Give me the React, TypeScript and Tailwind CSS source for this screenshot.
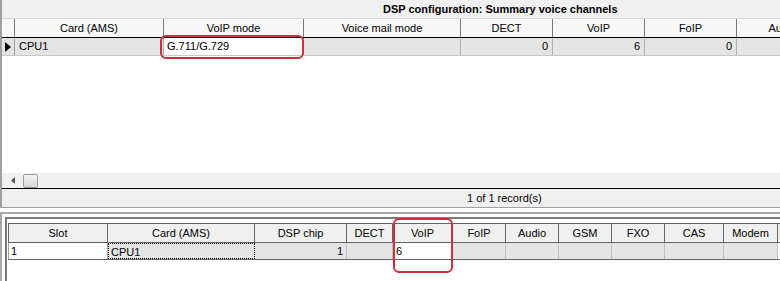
const font = { fontFamily: '"Liberation Sans", Arial, sans-serif' };

type Col = { label: string; w: string };

const topCols: Col[] = [
	{ label: '', w: 'w-[13px]' },
	{ label: 'Card (AMS)', w: 'w-[149px]' },
	{ label: 'VoIP mode', w: 'w-[140px]' },
	{ label: 'Voice mail mode', w: 'w-[157px]' },
	{ label: 'DECT', w: 'w-[92px]' },
	{ label: 'VoIP', w: 'w-[92px]' },
	{ label: 'FoIP', w: 'w-[92px]' },
	{ label: 'Audio', w: 'w-[92px]' },
];

const bottomCols: Col[] = [
	{ label: 'Slot', w: 'w-[100px]' },
	{ label: 'Card (AMS)', w: 'w-[147px]' },
	{ label: 'DSP chip', w: 'w-[92px]' },
	{ label: 'DECT', w: 'w-[46px]' },
	{ label: 'VoIP', w: 'w-[60px]' },
	{ label: 'FoIP', w: 'w-[53px]' },
	{ label: 'Audio', w: 'w-[53px]' },
	{ label: 'GSM', w: 'w-[53px]' },
	{ label: 'FXO', w: 'w-[53px]' },
	{ label: 'CAS', w: 'w-[59px]' },
	{ label: 'Modem', w: 'w-[54px]' },
];

function TopGrid() {
	return (
		<div className="flex flex-col h-[208px] border-l-2 border-b border-[#a0a0a0] bg-white">
			<div className="h-[19px] shrink-0 bg-[#f0f0f0] border-b border-[#d8d8d8] pl-[381px] text-[11px] font-bold leading-[19px] text-black whitespace-nowrap">
				DSP configuration: Summary voice channels
			</div>
			<div className="flex h-[19px] shrink-0 bg-[#f7f7f7] border-b border-black">
				{topCols.map((c, i) => (
					<div
						key={i}
						className={`${c.w} shrink-0 border-r border-[#7a7a7a] text-center text-[11px] leading-[18px] whitespace-nowrap overflow-hidden`}
					>
						{c.label}
					</div>
				))}
			</div>
			<div className="flex h-[18px] shrink-0 bg-[#e4e4e4] border-b border-[#c8c8c8] text-[11px] leading-[17px]">
				<div className="w-[13px] shrink-0 border-r border-[#a0a0a0] flex items-center pl-[3px]">
					<svg width="6" height="10" viewBox="0 0 6 10">
						<path d="M0 0 L6 5 L0 10 Z" fill="#000" />
					</svg>
				</div>
				<div className="w-[149px] shrink-0 border-r border-[#b0b0b0] pl-[4px]">CPU1</div>
				<div className="w-[140px] shrink-0 border-r border-[#b0b0b0] bg-white pl-[3px]">G.711/G.729</div>
				<div className="w-[157px] shrink-0 border-r border-[#b0b0b0]" />
				<div className="w-[92px] shrink-0 border-r border-[#b0b0b0] text-right pr-[4px]">0</div>
				<div className="w-[92px] shrink-0 border-r border-[#b0b0b0] text-right pr-[4px]">6</div>
				<div className="w-[92px] shrink-0 border-r border-[#b0b0b0] text-right pr-[4px]">0</div>
				<div className="w-[92px] shrink-0" />
			</div>
			<div className="flex-1" />
			<div className="h-[16px] shrink-0 bg-[#f0f0f0] border-b border-black flex items-center">
				<svg width="4" height="7" viewBox="0 0 4 7" className="ml-[9px]">
					<path d="M4 0 L0 3.5 L4 7 Z" fill="#555" />
				</svg>
				<div className="ml-[8px] w-[15px] h-[14px] rounded-[2px] border border-[#9a9a9a] bg-gradient-to-b from-[#f4f4f4] to-[#d6d6d6]" />
			</div>
			<div className="h-[18px] shrink-0 bg-[#f0f0f0] pl-[465px] text-[11px] leading-[18px] whitespace-nowrap">
				1 of 1 record(s)
			</div>
		</div>
	);
}

function BottomGrid() {
	return (
		<div className="mt-[4px] border-l-2 border-t-2 border-[#a8a8a8] pl-[3px] pt-[3px] h-[69px]">
			<div className="border-l-2 border-t-2 border-[#7a7a7a] pl-[1px] pt-[4px] h-full">
				<div className="flex h-[20px] bg-[#f0f0f0] border-t border-b border-[#646464]">
					{bottomCols.map((c, i) => (
						<div
							key={i}
							className={`${c.w} shrink-0 border-r border-[#646464] text-center text-[11px] leading-[18px] whitespace-nowrap ${i === 0 ? 'border-l' : ''}`}
						>
							{c.label}
						</div>
					))}
				</div>
				<div className="flex h-[17px] text-[11px] leading-[16px] border-b border-[#646464]">
					<div className="w-[100px] shrink-0 bg-white border-l border-r border-[#a0a0a0] pl-[2px]">1</div>
					<div className="w-[147px] shrink-0 bg-[#e4e4e4] border border-dotted border-black pl-[2px]">CPU1</div>
					<div className="w-[92px] shrink-0 bg-[#e4e4e4] border-r border-[#c0c0c0] text-right pr-[3px]">1</div>
					<div className="w-[46px] shrink-0 bg-[#e4e4e4] border-r border-[#c0c0c0]" />
					<div className="w-[60px] shrink-0 bg-white border-r border-[#c0c0c0] pl-[3px]">6</div>
					{[53, 53, 53, 53, 59, 54].map((w, i) => (
						<div
							key={i}
							className={`${['w-[53px]', 'w-[53px]', 'w-[53px]', 'w-[53px]', 'w-[59px]', 'w-[54px]'][i]} shrink-0 bg-[#e4e4e4] border-r border-[#c0c0c0]`}
						/>
					))}
				</div>
			</div>
		</div>
	);
}

export default function App() {
	return (
		<div className="relative w-[780px] h-[281px] overflow-hidden bg-white text-black" style={font}>
			<TopGrid />
			<BottomGrid />
			<div className="absolute left-[160px] top-[35px] w-[144px] h-[24px] rounded-[6px] border-2 border-[#c8323c]" />
			<div className="absolute left-[393px] top-[218px] w-[60px] h-[55px] rounded-[6px] border-2 border-[#c8323c]" />
		</div>
	);
}
